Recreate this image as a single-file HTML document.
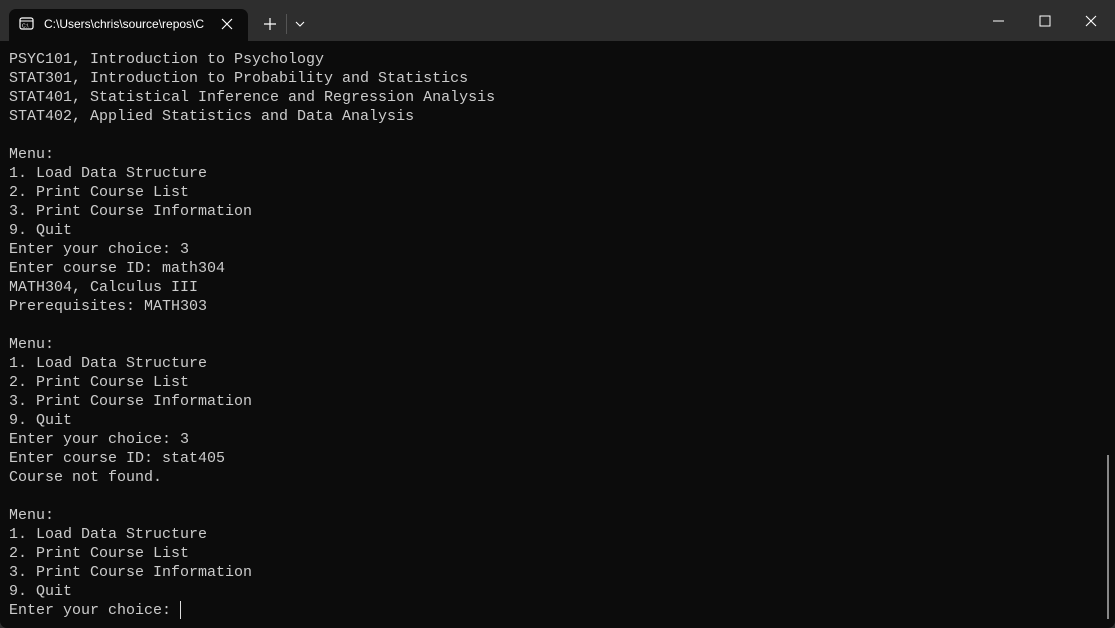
<!DOCTYPE html>
<html><head><style>
html,body{margin:0;padding:0;width:1115px;height:628px;overflow:hidden;background:#2e2e2e;}
.tab{position:absolute;left:9px;top:9px;width:239px;height:33px;background:#0c0c0c;border-radius:7px 7px 0 0;}
.tabtxt{position:absolute;left:44px;top:17px;font:12px "Liberation Sans",sans-serif;color:#fff;width:163px;overflow:hidden;white-space:nowrap;}
.term{position:absolute;left:0;top:41px;width:1115px;height:587px;background:#0c0c0c;border-radius:0 0 7px 7px;}
pre{position:absolute;left:9px;top:50px;margin:0;font:15px/19px "Liberation Mono","DejaVu Sans Mono",monospace;color:#cccccc;}
.sb{position:absolute;left:1107px;top:455px;width:2px;height:164px;background:#888;}
.cur{position:absolute;left:180px;top:601px;width:1px;height:18px;background:#ddd;}
</style></head><body>
<div class="tab"></div>
<svg style="position:absolute;left:19px;top:17px" width="16" height="14" viewBox="0 0 16 14"><rect x="1" y="1" width="13" height="11" rx="2" fill="none" stroke="#fff" stroke-width="1.2"/><line x1="1" y1="4" x2="14" y2="4" stroke="#fff"/><text x="3" y="10.5" font-size="5" fill="#fff" font-family="Liberation Sans">C:\</text></svg>
<div class="tabtxt">C:\Users\chris\source\repos\C</div>
<svg style="position:absolute;left:221px;top:18px" width="12" height="12"><path d="M1 1L11 11M11 1L1 11" stroke="#fff" stroke-width="1.2"/></svg>
<svg style="position:absolute;left:264px;top:18px" width="12" height="12"><path d="M6 0V12M0 6H12" stroke="#fff" stroke-width="1.2"/></svg>
<div style="position:absolute;left:286px;top:14px;width:1px;height:20px;background:#555"></div>
<svg style="position:absolute;left:295px;top:21px" width="10" height="6"><path d="M1 1L5 5L9 1" stroke="#fff" fill="none" stroke-width="1.1"/></svg>
<svg style="position:absolute;left:993px;top:20px" width="12" height="2"><path d="M0 1H11" stroke="#fff"/></svg>
<svg style="position:absolute;left:1039px;top:15px" width="12" height="12"><rect x="1" y="1" width="10" height="10" fill="none" stroke="#fff"/></svg>
<svg style="position:absolute;left:1085px;top:15px" width="12" height="12"><path d="M1 1L11 11M11 1L1 11" stroke="#fff" stroke-width="1.1"/></svg>
<div class="term"></div>
<pre>PSYC101, Introduction to Psychology
STAT301, Introduction to Probability and Statistics
STAT401, Statistical Inference and Regression Analysis
STAT402, Applied Statistics and Data Analysis

Menu:
1. Load Data Structure
2. Print Course List
3. Print Course Information
9. Quit
Enter your choice: 3
Enter course ID: math304
MATH304, Calculus III
Prerequisites: MATH303

Menu:
1. Load Data Structure
2. Print Course List
3. Print Course Information
9. Quit
Enter your choice: 3
Enter course ID: stat405
Course not found.

Menu:
1. Load Data Structure
2. Print Course List
3. Print Course Information
9. Quit
Enter your choice: </pre>
<div class="cur"></div>
<div class="sb"></div>
</body></html>
